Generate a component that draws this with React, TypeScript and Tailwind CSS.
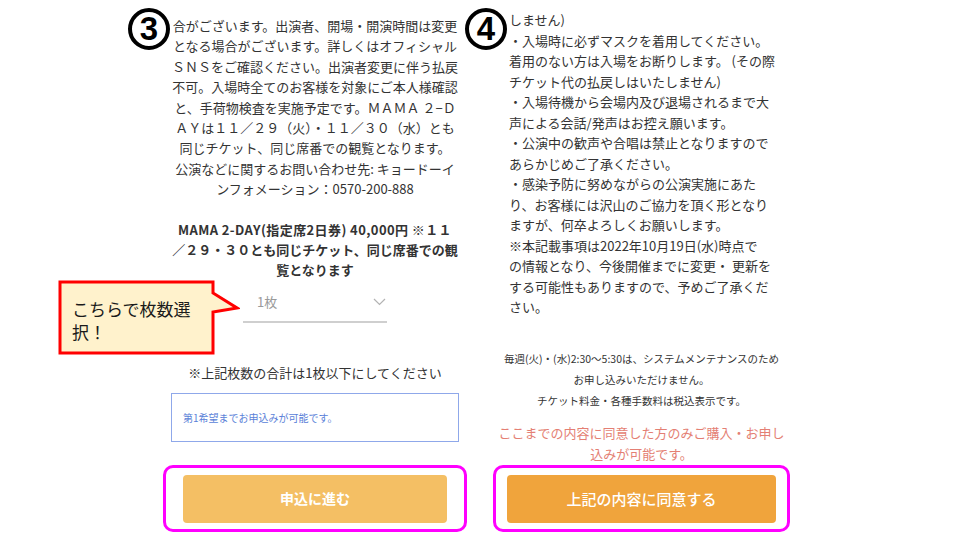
import React from 'react';

const jp = "font-['Noto_Sans_CJK_JP','Noto_Sans',sans-serif]";

const leftLines = [
  '合がございます。出演者、開場・開演時間は変更',
  'となる場合がございます。詳しくはオフィシャル',
  'ＳＮＳをご確認ください。出演者変更に伴う払戻',
  '不可。入場時全てのお客様を対象にご本人様確認',
  'と、手荷物検査を実施予定です。ＭＡＭＡ ２−Ｄ',
  'ＡＹは１１／２９（火）・１１／３０（水）とも',
  '同じチケット、同じ席番での観覧となります。',
  '公演などに関するお問い合わせ先: キョードーイ',
  'ンフォメーション：0570-200-888',
];

const ticketLines = [
  'MAMA 2-DAY(指定席2日券) 40,000円 ※１１',
  '／２９・３０とも同じチケット、同じ席番での観',
  '覧となります',
];

const rightLines = [
  'しません)',
  '・入場時に必ずマスクを着用してください。',
  '着用のない方は入場をお断りします。 (その際',
  'チケット代の払戻しはいたしません)',
  '・入場待機から会場内及び退場されるまで大',
  '声による会話/発声はお控え願います。',
  '・公演中の歓声や合唱は禁止となりますので',
  'あらかじめご了承ください。',
  '・感染予防に努めながらの公演実施にあた',
  'り、お客様には沢山のご協力を頂く形となり',
  'ますが、何卒よろしくお願いします。',
  '※本記載事項は2022年10月19日(水)時点で',
  'の情報となり、今後開催までに変更・ 更新を',
  'する可能性もありますので、予めご了承くだ',
  'さい。',
];

const noticeLines = [
  '毎週(火)・(水)2:30〜5:30は、システムメンテナンスのため',
  'お申し込みいただけません。',
  'チケット料金・各種手数料は税込表示です。',
];

const StepBadge: React.FC<{ n: string; className: string }> = ({ n, className }) => (
  <div
    className={`absolute flex h-[42px] w-[42px] items-center justify-center rounded-full border-[4.5px] border-black bg-white text-[33px] font-black leading-none text-black font-['Liberation_Sans',sans-serif] ${className}`}
  >
    <span className="-mt-[1px]">{n}</span>
  </div>
);

const Callout: React.FC = () => (
  <div className="absolute left-[58px] top-[280px] h-[76px] w-[182px]">
    <svg width="182" height="76" viewBox="0 0 182 76" className="absolute inset-0">
      <path
        d="M2 2 H155 V13 L179 28 L155 32 V73 H2 Z"
        fill="#fff2cc"
        stroke="#ff0000"
        strokeWidth="3"
        strokeLinejoin="miter"
      />
    </svg>
    <div className={`relative pl-[14px] pt-[17px] text-[17px] leading-[23px] text-[#1a1a1a] ${jp}`}>
      <div>こちらで枚数選</div>
      <div>択！</div>
    </div>
  </div>
);

export default function App() {
  return (
    <div className={`relative flex h-[540px] w-[960px] overflow-hidden bg-white ${jp}`}>
      {/* step 3 */}
      <div className="ml-[163px] flex w-[304px] flex-col">
        <div className="pt-[16px] text-center text-[13px] leading-[20.4px] text-[#333]">
          {leftLines.map((l) => (
            <div key={l} className="whitespace-nowrap">{l}</div>
          ))}
        </div>

        <div className="mt-[20px] text-center text-[13px] font-bold leading-[20px] text-[#333]">
          {ticketLines.map((l, i) => (
            <div key={l} className={`whitespace-nowrap ${i === 0 ? 'tracking-[0.4px]' : ''}`}>{l}</div>
          ))}
        </div>

        <div className="mx-auto mt-[3px] flex h-[40px] w-[144px] items-center justify-between border-b-2 border-[#cfcfcf] pl-[14px] pr-[1px]">
          <span className="text-[13px] text-[#9a9a9a]">1枚</span>
          <svg width="13" height="8" viewBox="0 0 13 8" fill="none">
            <path d="M1 1 L6.5 6.5 L12 1" stroke="#b3b3b3" strokeWidth="1.2" />
          </svg>
        </div>

        <div className="mt-[40px] whitespace-nowrap text-center text-[13px] leading-[20px] text-[#333]">
          ※上記枚数の合計は1枚以下にしてください
        </div>

        <div className="mx-auto mt-[10px] flex h-[49px] w-[288px] items-center border border-[#8fa8ea] pl-[11px] text-[10px] text-[#5a7fd8]">
          第1希望までお申込みが可能です。
        </div>

        <div className="mt-[23px] h-[67px] rounded-[10px] border-[3px] border-[#ff00ff] px-[17px] pt-[7px]">
          <div className="flex h-[48px] items-center justify-center rounded-[4px] bg-[#f4bf64] text-[14px] font-bold text-white">
            申込に進む
          </div>
        </div>
      </div>

      {/* step 4 */}
      <div className="ml-[26px] flex w-[297px] flex-col">
        <div className="pl-[16px] pt-[10px] text-[13px] leading-[20.5px] text-[#333]">
          {rightLines.map((l) => (
            <div key={l} className="whitespace-nowrap">{l}</div>
          ))}
        </div>

        <div className="mt-[30px] text-center text-[10.5px] leading-[21px] text-[#333]">
          {noticeLines.map((l) => (
            <div key={l} className="whitespace-nowrap">{l}</div>
          ))}
        </div>

        <div className="mt-[11px] text-center text-[13px] leading-[21px] text-[#e47f74]">
          <div className="whitespace-nowrap">ここまでの内容に同意した方のみご購入・お申し</div>
          <div className="whitespace-nowrap">込みが可能です。</div>
        </div>

        <div className="mt-[1.5px] h-[67px] rounded-[10px] border-[3px] border-[#ff00ff] px-[11px] pt-[7px]">
          <div className="flex h-[48px] items-center justify-center rounded-[4px] bg-[#f0a43c] text-[15px] font-medium text-white">
            上記の内容に同意する
          </div>
        </div>
      </div>

      <StepBadge n="3" className="left-[128px] top-[8px]" />
      <StepBadge n="4" className="left-[465px] top-[8px]" />
      <Callout />
    </div>
  );
}
